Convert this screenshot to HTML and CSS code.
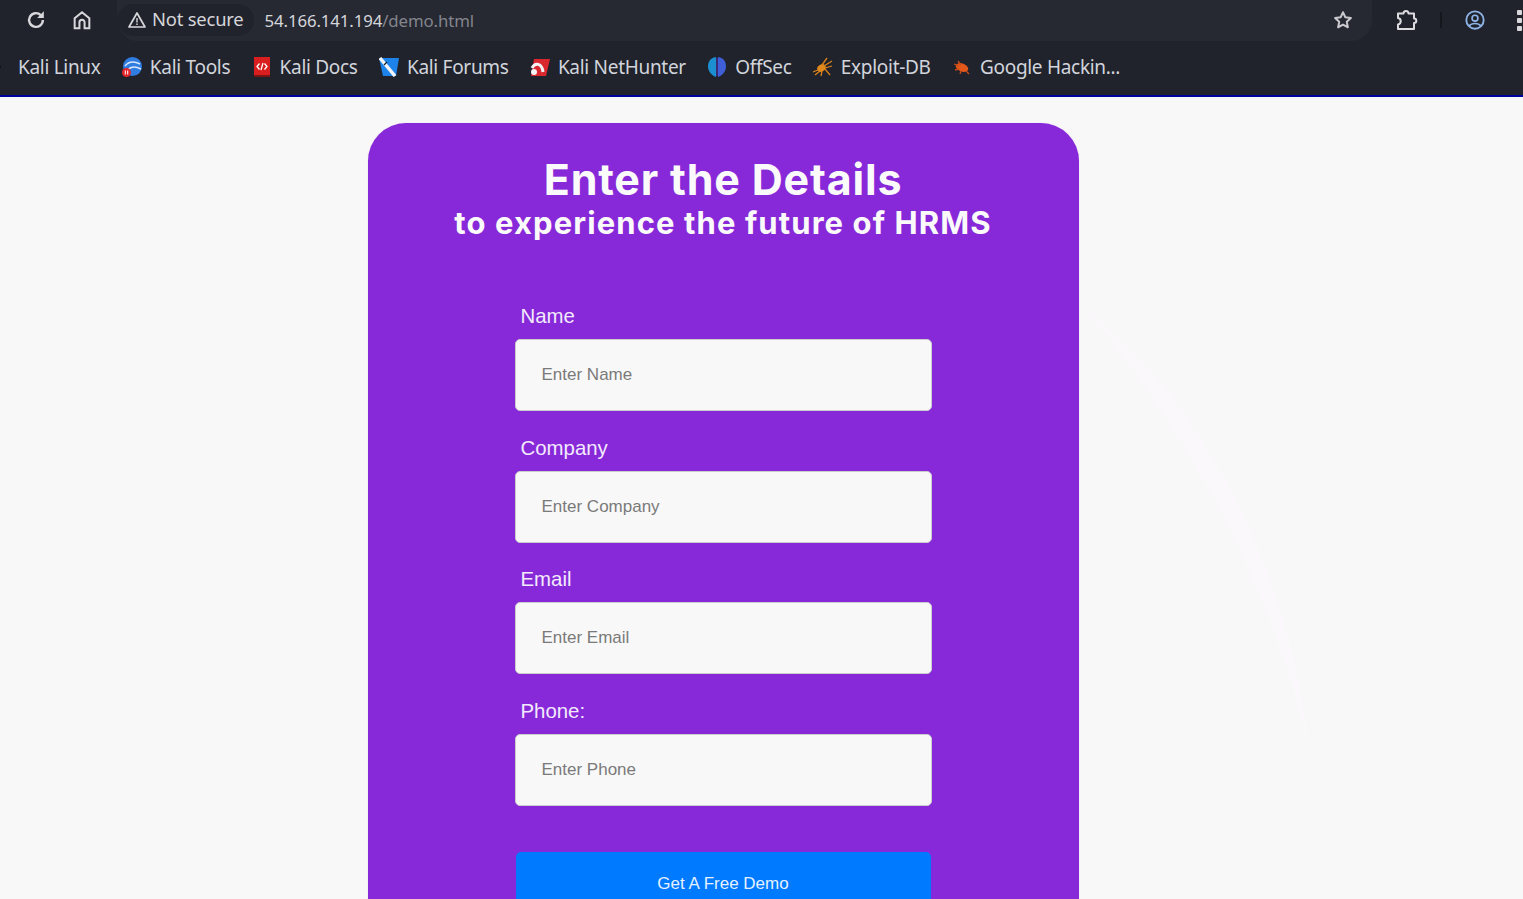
FILE: index.html
```html
<!DOCTYPE html>
<html lang="en">
<head>
    <meta charset="UTF-8">
    <meta name="viewport" content="width=device-width, initial-scale=1.0">
    <title>Demo</title>
    <link rel="stylesheet" href="styles.css">
</head>
<body>
    <header class="browser">
        <div class="toolbar">
            <svg class="tool-icon reload" viewBox="0 0 24 24"><path d="M19.5 12a7.500 7.500 0 1 1-2.300-5.400" fill="none" stroke="#d8d8dc" stroke-width="2.600"/><path d="M20.500 2.500v7.200h-7.200z" fill="#d8d8dc"/></svg>
            <svg class="tool-icon home" viewBox="0 0 24 24"><path d="M4 21V10l8-6.500 8 6.500v11h-5.200v-6.500a2.800 2.800 0 0 0-5.600 0V21z" fill="none" stroke="#d8d8dc" stroke-width="2.200"/></svg>
            <div class="omnibox">
                <div class="secure-chip">
                    <svg class="warn" viewBox="0 0 20 20"><path d="M10 3 18 17H2z" fill="none" stroke="#d8d8dc" stroke-width="1.700" stroke-linejoin="round"/><path d="M10 8v4.500M10 13.600v1.500" stroke="#d8d8dc" stroke-width="1.400"/></svg>
                    <span class="secure-text">Not secure</span>
                </div>
                <div class="url">54.166.141.194<span class="url-path">/demo.html</span></div>
                <svg class="star" viewBox="0 0 24 24"><path d="M12 3.500l2.600 5.600 6 .7-4.500 4.100 1.200 6L12 17l-5.300 2.900 1.200-6-4.500-4.100 6-.7z" fill="none" stroke="#c9c9cd" stroke-width="2.200" stroke-linejoin="round"/></svg>
            </div>
            <svg class="tool-icon puzzle" viewBox="0 0 24 24"><path d="M4 5.500H9.500a2.500 2.500 0 0 1 5 0H20v5a2.300 2.300 0 0 1 0 4.600v6H4v-4.500a3.300 3.300 0 0 0 0-6.500z" fill="none" stroke="#dcdce0" stroke-width="2" stroke-linejoin="round"/></svg>
            <div class="divider"></div>
            <svg class="tool-icon profile" viewBox="0 0 24 24"><circle cx="12" cy="12" r="9.500" fill="none" stroke="#8fb4e8" stroke-width="2"/><circle cx="12" cy="10" r="3.200" fill="none" stroke="#8fb4e8" stroke-width="1.800"/><path d="M5.500 18.500c3-3.600 10-3.600 13 0" fill="none" stroke="#8fb4e8" stroke-width="1.800"/></svg>
            <div class="dots"><i></i><i></i><i></i></div>
        </div>
        <nav class="bookmarks">
            <a class="mark first">
                <svg class="fav dragon" viewBox="0 0 20 20"><path d="M1 5c5-1 8 1 9 5M1 10c3-1 6 0 8 5M3 14l3 3" fill="none" stroke="#0a0b0f" stroke-width="2.200"/></svg>
                Kali Linux
            </a>
            <a class="mark">
                <svg class="fav" viewBox="0 0 20 20"><circle cx="10.500" cy="9.500" r="9.500" fill="#2f7de1"/><path d="M3 9c4-5 9-5 15-2M6 13c3-4 7-4 13-1" fill="none" stroke="#dbe8fa" stroke-width="1.400"/><circle cx="4.500" cy="15.500" r="4.500" fill="#e5252a"/><path d="M3.300 13.500v4M5.700 13.500v4" stroke="#fff" stroke-width="1"/></svg>
                Kali Tools
            </a>
            <a class="mark">
                <svg class="fav" viewBox="0 0 20 20"><path d="M2 0h16v18H2z" fill="#d81e1e"/><path d="M2 18h16v2H2z" fill="#7d1414"/><path d="M7.500 6.500 5 9.500l2.500 3M12.500 6.500l2.500 3-2.500 3M11 6 9 13" fill="none" stroke="#fff" stroke-width="1.300"/></svg>
                Kali Docs
            </a>
            <a class="mark">
                <svg class="fav" viewBox="0 0 20 20"><path d="M0 1h20l-3 18H4z" fill="#1d83ea"/><path d="M1 1l15 18" stroke="#f2f4f8" stroke-width="3.400"/><path d="M8 5l-3 3" stroke="#1a1c24" stroke-width="1.200"/></svg>
                Kali Forums
            </a>
            <a class="mark">
                <svg class="fav" viewBox="0 0 20 20"><path d="M4 2h16l-4 17H1z" fill="#d9292e"/><path d="M2 11c3-6 10-5 11 4" fill="none" stroke="#f4f4f4" stroke-width="3"/><circle cx="4" cy="15" r="3" fill="#f4f4f4"/></svg>
                Kali NetHunter
            </a>
            <a class="mark">
                <svg class="fav" viewBox="0 0 20 20"><path d="M9 0C3 1 1 5 1 9.500S4 18 9 20z" fill="#1c8fd0"/><path d="M11 0c6 1 8 5 8 9.500S16 18 11 20z" fill="#3e5fd8"/><path d="M10 1v18" stroke="#4a2fa8" stroke-width="1.200"/></svg>
                OffSec
            </a>
            <a class="mark">
                <svg class="fav" viewBox="0 0 20 20"><ellipse cx="8.500" cy="11" rx="4.500" ry="3.500" fill="#e08a1e" transform="rotate(-30 8.500 11)"/><path d="M9 8 14 1M11 9l8-5M12 11l7-2M12 12l5 6M7 14l-5 4M5 13l-5 2M9 14l-1 5" fill="none" stroke="#d9801a" stroke-width="1.300"/></svg>
                Exploit-DB
            </a>
            <a class="mark">
                <svg class="fav" viewBox="0 0 20 20"><ellipse cx="10" cy="10.500" rx="6.500" ry="4" fill="#e4571a" transform="rotate(20 10 10.500)"/><path d="M2 7l5 2M6 4l3 4M3 13l4-1M14 14l3 3M9 14l-1 3" stroke="#c84c17" stroke-width="1.300"/></svg>
                Google Hackin...
            </a>
        </nav>
    </header>

    <svg class="bg-arc" viewBox="0 0 240 450"><path d="M2 2C110 90 205 250 226 445C190 280 100 120 2 2z" fill="#fbf8fb"/></svg>

    <main class="page">
        <section class="demo-card">
            <h1>Enter the Details</h1>
            <h2>to experience the future of HRMS</h2>
            <form class="demo-form">
                <label for="name">Name</label>
                <input type="text" id="name" placeholder="Enter Name">
                <label for="company">Company</label>
                <input type="text" id="company" placeholder="Enter Company">
                <label for="email">Email</label>
                <input type="email" id="email" placeholder="Enter Email">
                <label for="phone">Phone:</label>
                <input type="tel" id="phone" placeholder="Enter Phone">
                <button type="button">Get A Free Demo</button>
            </form>
        </section>
    </main>
</body>
</html>
```

FILE: styles.css
```css
* {
    box-sizing: border-box;
}
html, body {
    height: 899px;
    overflow: hidden;
}
body {
    margin: 0;
    background-color: #f8f8f8;
    font-family: "Liberation Sans", Arial, sans-serif;
    position: relative;
}

/* browser chrome */
.browser {
    height: 97px;
    background-color: #21232c;
    border-bottom: 2px solid #0000a0;
    font-family: "Noto Sans", sans-serif;
}
.toolbar {
    height: 42px;
    display: flex;
    align-items: center;
    padding-left: 25px;
    padding-bottom: 2px;
}
.tool-icon {
    width: 22px;
    height: 22px;
    flex: none;
}
.home {
    margin-left: 24px;
}
.omnibox {
    width: 1255px;
    height: 42px;
    margin-left: 24px;
    background-color: #262832;
    border-radius: 0 0 21px 21px;
    display: flex;
    align-items: center;
    padding-right: 18px;
}
.secure-chip {
    height: 32px;
    padding: 0 10px;
    border-radius: 16px;
    background-color: #21232c;
    display: flex;
    align-items: center;
    gap: 5px;
    color: #d5d6da;
    font-size: 18.4px;
    letter-spacing: -0.2px;
}
.secure-text {
    padding-bottom: 3px;
}
.warn {
    width: 20px;
    height: 20px;
}
.url {
    margin-left: 11px;
    color: #d5d6da;
    font-size: 16.8px;
    letter-spacing: -0.1px;
}
.url-path {
    color: #83858d;
}
.star {
    width: 22px;
    height: 22px;
    margin-left: auto;
}
.puzzle {
    margin-left: 22px;
    width: 24px;
    height: 24px;
}
.divider {
    width: 2px;
    height: 16px;
    margin-left: 22px;
    background-color: #16171d;
}
.profile {
    margin-left: 22px;
}
.dots {
    margin-left: 31px;
    display: flex;
    flex-direction: column;
    gap: 3px;
}
.dots i {
    display: block;
    width: 5px;
    height: 5px;
    background-color: #d8d8dc;
    border-radius: 1px;
}
.bookmarks {
    height: 53px;
    display: flex;
    align-items: center;
    gap: 21.3px;
    padding-left: 18px;
    padding-bottom: 3px;
    color: #d2d5dc;
    font-size: 19px;
    letter-spacing: -0.3px;
}
.mark {
    display: flex;
    align-items: center;
    gap: 8px;
    white-space: nowrap;
}
.fav {
    width: 20px;
    height: 20px;
    flex: none;
}
.first .dragon {
    position: absolute;
    left: -10px;
    top: 58px;
}

/* faint arc behind the page */
.bg-arc {
    position: absolute;
    left: 1083px;
    top: 305px;
    width: 240px;
    height: 450px;
}

/* form card */
.page {
    display: flex;
    justify-content: center;
    padding-top: 26px;
    padding-right: 77px;
    position: relative;
}
.demo-card {
    width: 711px;
    height: 900px;
    background-color: #8829d9;
    border-radius: 38px;
    box-shadow: 0 0 1px rgba(190, 150, 235, 0.6);
    padding-top: 30px;
    color: #fafafa;
    text-align: center;
    font-family: Inter, sans-serif;
}
h1 {
    margin: 0;
    font-size: 43px;
    line-height: 52px;
    font-weight: 700;
    letter-spacing: 0.8px;
}
h2 {
    margin: 0;
    font-size: 31px;
    line-height: 36px;
    font-weight: 700;
    letter-spacing: 1.1px;
}
.demo-form {
    width: 417px;
    margin: 63px auto 0;
    text-align: left;
    font-family: "Liberation Sans", Arial, sans-serif;
}
label {
    display: block;
    padding-left: 6px;
    font-size: 20.4px;
    line-height: 24px;
    margin-bottom: 11px;
    color: #f3e9fc;
}
input {
    display: block;
    width: 100%;
    height: 72px;
    margin-bottom: 24.5px;
    padding: 0 26px;
    border: 1px solid #ccc;
    border-radius: 5px;
    background-color: #f8f8f8;
    font-family: "Liberation Sans", Arial, sans-serif;
    font-size: 17px;
}
input::placeholder {
    color: #7a7a7a;
}
button {
    display: block;
    width: 415px;
    height: 64px;
    margin: 46px auto 0;
    border: none;
    border-radius: 5px;
    background-color: #007bff;
    color: #e6f0ff;
    font-family: "Liberation Sans", Arial, sans-serif;
    font-size: 17px;
}
```
